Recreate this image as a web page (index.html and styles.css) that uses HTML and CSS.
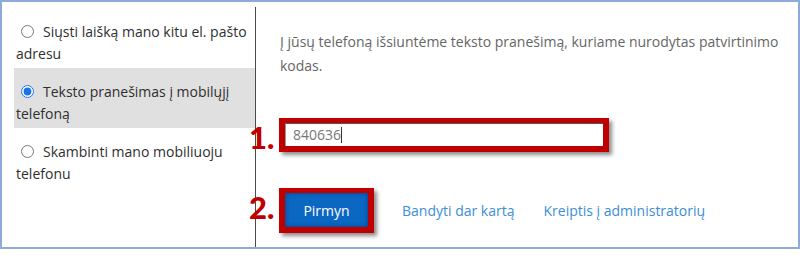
FILE: index.html
```html
<!DOCTYPE html>
<html lang="lt">
<head>
<meta charset="utf-8">
<title>Patvirtinimas</title>
<link rel="stylesheet" href="styles.css">
</head>
<body>
<div class="frame">
  <div class="left">
    <label class="option">
      <input type="radio" name="m"><span>Siųsti laišką mano kitu el. pašto adresu</span>
    </label>
    <label class="option selected">
      <input type="radio" name="m" checked><span>Teksto pranešimas į mobilųjį telefoną</span>
    </label>
    <label class="option">
      <input type="radio" name="m"><span>Skambinti mano mobiliuoju telefonu</span>
    </label>
  </div>
  <div class="right">
    <p class="info">Į jūsų telefoną išsiuntėme teksto pranešimą, kuriame nurodytas patvirtinimo kodas.</p>
    <div class="mark mark-input">
      <span class="num">1.</span>
      <div class="code">840636<span class="caret"></span></div>
    </div>
    <div class="actions">
      <div class="mark mark-btn">
        <span class="num">2.</span>
        <button class="btn">Pirmyn</button>
      </div>
      <a class="link" href="#">Bandyti dar kartą</a>
      <a class="link" href="#">Kreiptis į administratorių</a>
    </div>
  </div>
</div>
</body>
</html>
```

FILE: styles.css
```css
* { box-sizing: border-box; }
html, body { margin: 0; padding: 0; background: #fff; }
body {
  font-family: "Open Sans", "Noto Sans", sans-serif;
  width: 800px;
  height: 257px;
}
.frame {
  width: 800px;
  height: 249px;
  border: 2px solid #8eaadb;
  display: flex;
}
.left {
  width: 254px;
  margin-top: 5px;
  border-right: 1px solid #4a4a4a;
  padding-top: 1px;
  display: flex;
  flex-direction: column;
}
.option {
  display: block;
  margin-left: 12px;
  padding: 13px 1px 3px 2px;
  font-size: 14px;
  line-height: 22px;
  color: #2f2f2f;
}
.option.selected { background: #e0e0e0; }
.option input {
  width: 13px;
  height: 13px;
  margin: 0 9px 0 5px;
  vertical-align: -1px;
  accent-color: #1a73e8;
}
.right {
  flex: 1;
  padding: 28px 0 0 24px;
  display: flex;
  flex-direction: column;
  align-items: flex-start;
}
.info {
  margin: 0;
  width: 500px;
  font-size: 14px;
  line-height: 24px;
  color: #666;
}
.mark {
  position: relative;
  border: 6px solid #c00000;
  border-top-width: 5px;
  box-shadow: 3px 3px 4px rgba(0, 0, 0, 0.45);
}
.mark-input {
  margin: 40px 0 0 -1px;
  width: 330px;
}
.code {
  height: 23px;
  border-top: 1px solid #555;
  border-left: 1px solid #999;
  padding-left: 7px;
  font-size: 14px;
  line-height: 22px;
  color: #777;
  background: #fff;
}
.caret {
  display: inline-block;
  width: 1px;
  height: 16px;
  background: #333;
  vertical-align: -3px;
}
.num {
  position: absolute;
  left: -36px;
  top: -4px;
  font-family: "Lato", sans-serif;
  font-weight: 900;
  font-size: 31px;
  line-height: 36px;
  color: #c00000;
}
.actions {
  margin: 36px 0 0 -1px;
  display: flex;
  align-items: center;
}
.mark-btn { margin-right: 28px; }
.btn {
  display: block;
  width: 83px;
  height: 34px;
  border: 0;
  padding: 0;
  background: #0a67c2;
  box-shadow: inset 0 0 4px rgba(0, 30, 80, 0.6);
  color: #fff;
  font-family: "Open Sans", sans-serif;
  font-size: 14px;
}
.link {
  font-size: 14px;
  color: #3c8ed6;
  text-decoration: none;
  margin-right: 29px;
}
```
